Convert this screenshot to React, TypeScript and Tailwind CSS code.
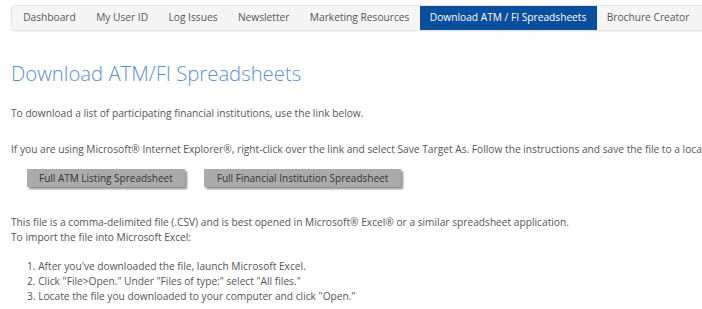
import React from 'react';

const tabs = [
  'Dashboard',
  'My User ID',
  'Log Issues',
  'Newsletter',
  'Marketing Resources',
  'Download ATM / FI Spreadsheets',
  'Brochure Creator',
];

export default function App() {
  const active = 'Download ATM / FI Spreadsheets';

  return (
    <div
      className="w-[702px] h-[309px] overflow-hidden bg-white text-[#555]"
      style={{ fontFamily: '"Open Sans", sans-serif' }}
    >
      {/* Nav */}
      <div className="pt-[5px] pl-[11px]">
        <ul className="flex items-center w-[740px] h-[26px] pl-[1px] bg-[#f5f5f5] border border-[#e6e6e6] rounded-[4px] shadow-[0_1px_2px_rgba(0,0,0,0.06)]">
          {tabs.map((t) => (
            <li
              key={t}
              className={`h-[24px] flex items-center px-[10.2px] text-[10.2px] whitespace-nowrap ${
                t === active ? 'bg-[#0a4f9c] text-white' : 'text-[#555]'
              }`}
            >
              {t}
            </li>
          ))}
        </ul>
      </div>

      {/* Content */}
      <div className="px-[11px]">
        <h1 className="mt-[29px] text-[20.3px] font-light leading-[26px] text-[#5b8fd8]">
          Download ATM/FI Spreadsheets
        </h1>

        <p className="mt-[20px] text-[10.2px] leading-[15px] whitespace-nowrap">
          To download a list of participating financial institutions, use the link below.
        </p>
        <p className="mt-[21px] text-[10.2px] leading-[15px] whitespace-nowrap">
          If you are using Microsoft® Internet Explorer®, right-click over the link and select Save Target As. Follow the instructions and save the file to a local drive.
        </p>

        <div className="flex gap-[19px] mt-[12px] pl-[16px]">
          <button className="h-[18px] px-[12px] bg-[#ababab] text-[10px] text-[#333] shadow-[2px_2px_2px_rgba(0,0,0,0.45)]">
            Full ATM Listing Spreadsheet
          </button>
          <button className="h-[18px] px-[13px] bg-[#ababab] text-[10px] text-[#333] shadow-[2px_2px_2px_rgba(0,0,0,0.45)]">
            Full Financial Institution Spreadsheet
          </button>
        </div>

        <p className="mt-[28px] text-[10.2px] leading-[15px] whitespace-nowrap">
          This file is a comma-delimited file (.CSV) and is best opened in Microsoft® Excel® or a similar spreadsheet application.
          <br />
          To import the file into Microsoft Excel:
        </p>

        <ol className="mt-[14px] pl-[16px] text-[10.2px] leading-[15px]">
          <li>1. After you've downloaded the file, launch Microsoft Excel.</li>
          <li>2. Click "File&gt;Open." Under "Files of type:" select "All files."</li>
          <li>3. Locate the file you downloaded to your computer and click "Open."</li>
        </ol>
      </div>
    </div>
  );
}
